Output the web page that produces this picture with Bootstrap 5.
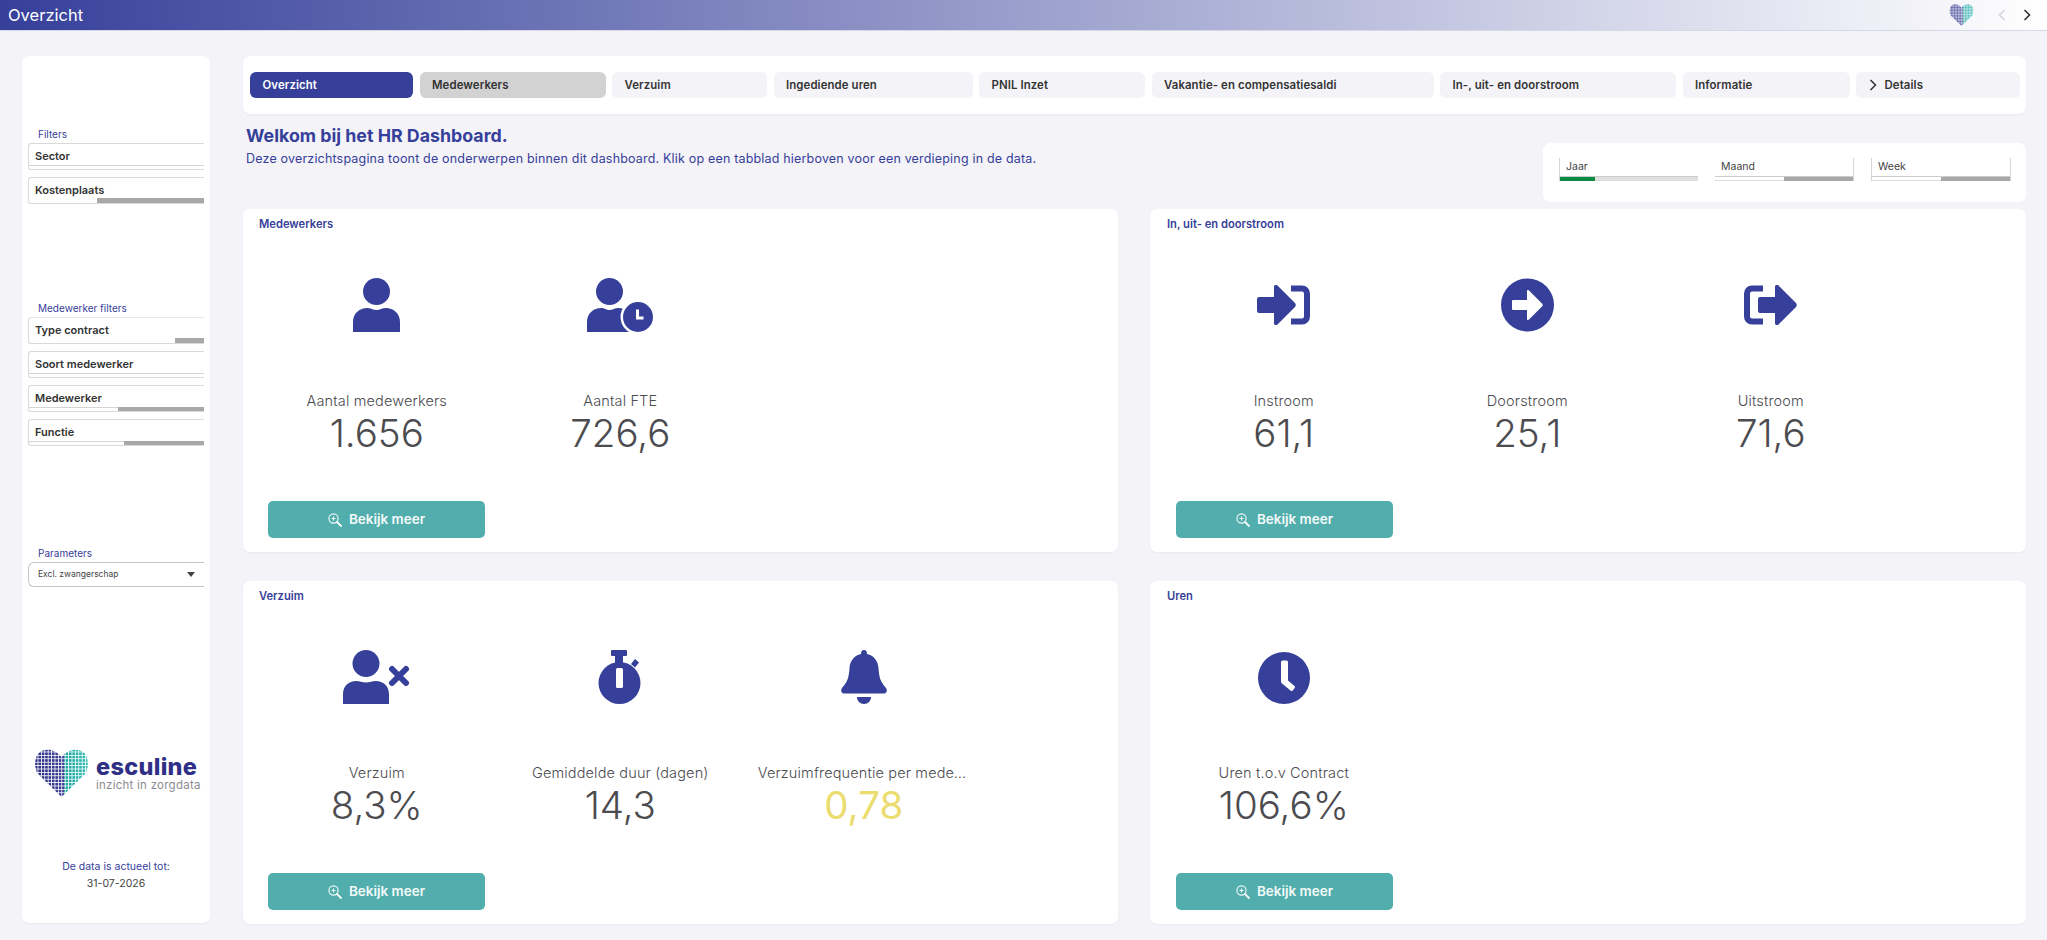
<!DOCTYPE html>
<html lang="nl">
<head>
    <meta charset="utf-8">
    <meta name="viewport" content="width=device-width, initial-scale=1">
    <title>Overzicht</title>
    <link href="https://cdn.jsdelivr.net/npm/bootstrap@5.3.3/dist/css/bootstrap.min.css" rel="stylesheet">
    <style>
        body {
            background: #f3f3f8;
            font-family: Inter, "Liberation Sans", sans-serif;
            height: 940px;
            overflow: hidden;
        }
        .top-bar {
            height: 31px;
            padding: 0 16px 0 8px;
            background: linear-gradient(90deg, #36409a 0%, #ffffff 100%);
            border-bottom: 1px solid #d5d6e6;
            color: #fff;
            font-size: 16.5px;
        }
        .top-heart { opacity: .85; }
        .top-arrows { gap: 17px; margin-left: 24px; }
        .page-wrap { padding: 25px 21px 0 22px; gap: 33px; }
        .side-panel {
            width: 188px;
            height: 867px;
            flex: none;
            background: #fff;
            border-radius: 7px;
            box-shadow: 0 1px 2px rgba(40, 40, 90, .05);
            padding: 0 6px;
        }
        .side-title { color: #36409a; font-size: 10px; line-height: 12px; padding-left: 10px; }
        .slicer {
            height: 27px;
            margin-bottom: 7px;
            border: 1px solid #d9d9d9;
            border-right: 0;
            border-radius: 3px 0 0 3px;
            color: #333;
            font-size: 11px;
            font-weight: 600;
            line-height: 14px;
            padding: 5px 6px 0;
            position: relative;
        }
        .slicer-track {
            position: absolute;
            left: 0; right: 0; bottom: 0;
            height: 4px;
            border-top: 1px solid #d4d4d4;
        }
        .slicer-fill {
            position: absolute;
            right: 0; top: -1px; bottom: 0;
            background: #a8a8a8;
        }
        .select-box {
            height: 25px;
            border: 1px solid #c4c4c4;
            border-right: 0;
            border-radius: 6px 0 0 6px;
            padding: 0 9px;
            font-size: 8.5px;
            color: #444;
        }
        .select-caret {
            width: 0; height: 0;
            border-left: 4px solid transparent;
            border-right: 4px solid transparent;
            border-top: 5px solid #444;
        }
        .brand-name { color: #2f2f86; font-size: 23.5px; font-weight: 800; line-height: 24px; letter-spacing: .3px; }
        .brand-sub { color: #8c8c92; font-size: 11.5px; line-height: 13px; letter-spacing: .25px; white-space: nowrap; }
        .data-note { font-size: 10.5px; line-height: 17px; color: #36409a; text-align: center; }
        .data-note div + div { color: #444; }
        .main-area { width: 1783px; flex: none; }
        .tab-card {
            height: 58px;
            padding: 16px 6px 0 7px;
            gap: 6.5px;
            background: #fff;
            border-radius: 7px;
            box-shadow: 0 1px 2px rgba(40, 40, 90, .05);
        }
        .tab-item {
            height: 26px;
            background: #f3f3f8;
            border-radius: 6px;
            color: #333;
            font-size: 11.4px;
            font-weight: 600;
            line-height: 26px;
            padding-left: 12.5px;
            letter-spacing: .1px;
            white-space: nowrap;
        }
        .tab-item.tab-active { background: #36409a; color: #fff; }
        .tab-item.tab-hover { background: #d2d2d2; }
        .welcome-row { height: 95px; }
        .welcome-title { color: #36409a; font-size: 17.8px; font-weight: 700; line-height: 22px; margin: 11px 0 0 3px; }
        .welcome-text { color: #36409a; font-size: 12.5px; line-height: 16px; margin: 4px 0 0 3px; letter-spacing: .18px; }
        .period-card {
            width: 483px;
            height: 59px;
            margin-top: 29px;
            padding: 15px 15px 0 16px;
            gap: 17px;
            background: #fff;
            border-radius: 7px;
        }
        .period-box {
            flex: 1;
            height: 23px;
            border-left: 1px solid #d4d4d4;
            border-right: 1px solid #d4d4d4;
            color: #444;
            font-size: 10.5px;
            line-height: 14px;
            padding: 2px 6px 0;
            position: relative;
        }
        .period-box.period-first { border-right: 0; }
        .period-box.period-mid { border-left: 0; }
        .period-track {
            position: absolute;
            left: 0; right: 0; bottom: 0;
            height: 5px;
            background: #fff;
            border-top: 1px solid #ccc;
            border-bottom: 1px solid #ddd;
        }
        .period-first .period-track { background: #e0e0e0; }
        .period-fill { position: absolute; top: 0; bottom: -1px; background: #a8a8a8; }
        .dash-grid { display: grid; grid-template-columns: 875px 876px; column-gap: 32px; row-gap: 29px; }
        .dash-card {
            height: 343px;
            background: #fff;
            border-radius: 7px;
            box-shadow: 0 1px 2px rgba(40, 40, 90, .05);
            padding: 8px 12px 0;
        }
        .dash-title { color: #36409a; font-size: 11.2px; font-weight: 600; line-height: 14px; padding-left: 4px; height: 14px; }
        .kpi-row { margin-top: 47px; height: 223px; }
        .kpi-item { width: 243.5px; flex: none; color: #4b4b50; text-align: center; }
        .kpi-icon { height: 54px; margin-bottom: 59px; }
        .kpi-icon svg { display: block; fill: #36409a; }
        .kpi-label { font-size: 14.5px; font-weight: 300; line-height: 20px; color: #4b4b50; max-width: 212px; letter-spacing: .15px; }
        .kpi-value { font-size: 38.5px; font-weight: 300; line-height: 45px; }
        .kpi-warn { color: #ebdc6e; font-weight: 400; }
        .more-btn {
            width: 217px;
            height: 37px;
            margin-left: 13px;
            background: #52aeac;
            border: 0;
            border-radius: 5px;
            color: #f4fafa;
            font-size: 13.5px;
            font-weight: 600;
            gap: 7px;
        }
        .more-btn:hover { background: #52aeac; color: #f4fafa; }
        .dash-right .more-btn { margin-left: 14px; }
        .dash-right .dash-title { padding-left: 5px; }
    </style>
</head>
<body>
    <div class="top-bar d-flex align-items-center">
        <div class="flex-grow-1">Overzicht</div>
        <svg class="top-heart" width="25" height="22" viewBox="0 0 53 48"><use href="#heart"/></svg>
        <div class="top-arrows d-flex align-items-center">
            <svg width="8" height="12" viewBox="0 0 8 12" fill="none" stroke="#d4d4da" stroke-width="1.6"><path d="M6.500 1 1.500 6l5 5"/></svg>
            <svg width="8" height="12" viewBox="0 0 8 12" fill="none" stroke="#333" stroke-width="1.6"><path d="M1.500 1l5 5-5 5"/></svg>
        </div>
    </div>

    <svg width="0" height="0" class="position-absolute">
        <defs>
            <pattern id="dotGrid" width="3.4" height="3.4" patternUnits="userSpaceOnUse">
                <rect width="2.6" height="2.6" fill="#fff"/>
            </pattern>
            <linearGradient id="heartFill" x1="0" y1="0" x2="1" y2="0">
                <stop offset="0" stop-color="#2f2f86"/>
                <stop offset=".54" stop-color="#3b3f94"/>
                <stop offset=".56" stop-color="#1aa6a0"/>
                <stop offset="1" stop-color="#35bdb6"/>
            </linearGradient>
            <mask id="dotMask">
                <rect width="53" height="48" fill="url(#dotGrid)"/>
            </mask>
            <symbol id="heart" viewBox="0 0 53 48">
                <path mask="url(#dotMask)" fill="url(#heartFill)" d="M26.500 48 3 25C-1.500 18-.5 7 5 3c6-4 15-3 21.500 5C33 0 42-1 48 3c5.500 4 6.500 15 2 22Z"/>
            </symbol>
            <symbol id="zoomGlass" viewBox="0 0 14 14">
                <circle cx="5.500" cy="5.500" r="4.600" fill="none" stroke="currentColor" stroke-width="1.100"/>
                <path d="M3.500 5.500h4M5.500 3.500v4" fill="none" stroke="currentColor" stroke-width="1"/>
                <path d="M9 9l4 4" fill="none" stroke="currentColor" stroke-width="1.800" stroke-linecap="round"/>
            </symbol>
        </defs>
    </svg>

    <div class="page-wrap d-flex">
        <aside class="side-panel d-flex flex-column">
            <div class="side-title" style="margin-top:72px">Filters</div>
            <div class="slicer" style="margin-top:3px">Sector<div class="slicer-track"></div></div>
            <div class="slicer">Kostenplaats<div class="slicer-track border-0"><div class="slicer-fill" style="width:107px"></div></div></div>

            <div class="side-title" style="margin-top:91px">Medewerker filters</div>
            <div class="slicer" style="margin-top:3px;border-top-color:#e6e6e6">Type contract<div class="slicer-track border-0"><div class="slicer-fill" style="width:29px"></div></div></div>
            <div class="slicer">Soort medewerker<div class="slicer-track"></div></div>
            <div class="slicer">Medewerker<div class="slicer-track"><div class="slicer-fill" style="width:86px"></div></div></div>
            <div class="slicer">Functie<div class="slicer-track"><div class="slicer-fill" style="width:80px"></div></div></div>

            <div class="side-title" style="margin-top:94px">Parameters</div>
            <div class="select-box d-flex align-items-center justify-content-between" style="margin-top:3px">
                <span>Excl. zwangerschap</span><span class="select-caret"></span>
            </div>

            <div class="d-flex align-items-center" style="margin:162px 0 0 7px">
                <svg width="53" height="48" class="flex-none"><use href="#heart"/></svg>
                <div class="ms-2">
                    <div class="brand-name">esculine</div>
                    <div class="brand-sub">inzicht in zorgdata</div>
                </div>
            </div>
            <div class="data-note" style="margin-top:61px">
                <div>De data is actueel tot:</div>
                <div>31-07-2026</div>
            </div>
        </aside>

        <main class="main-area">
            <div class="tab-card d-flex">
                <div class="tab-item tab-active" style="width:163px">Overzicht</div>
                <div class="tab-item tab-hover" style="width:186px">Medewerkers</div>
                <div class="tab-item" style="width:155px">Verzuim</div>
                <div class="tab-item" style="width:199px">Ingediende uren</div>
                <div class="tab-item" style="width:166px">PNIL Inzet</div>
                <div class="tab-item" style="width:282px">Vakantie- en compensatiesaldi</div>
                <div class="tab-item" style="width:236px">In-, uit- en doorstroom</div>
                <div class="tab-item" style="width:167px">Informatie</div>
                <div class="tab-item d-flex align-items-center" style="width:164px">
                    <svg width="8" height="12" viewBox="0 0 8 12" fill="none" stroke="#333" stroke-width="1.500" class="me-2"><path d="M1.500 1l5 5-5 5"/></svg>
                    Details
                </div>
            </div>

            <div class="welcome-row d-flex justify-content-between">
                <div>
                    <div class="welcome-title">Welkom bij het HR Dashboard.</div>
                    <div class="welcome-text">Deze overzichtspagina toont de onderwerpen binnen dit dashboard. Klik op een tabblad hierboven voor een verdieping in de data.</div>
                </div>
                <div class="period-card d-flex">
                    <div class="period-box period-first">Jaar<div class="period-track"><div class="period-fill" style="left:0;width:35px;background:#0b8a45"></div></div></div>
                    <div class="period-box period-mid">Maand<div class="period-track"><div class="period-fill" style="right:0;width:69px"></div></div></div>
                    <div class="period-box">Week<div class="period-track"><div class="period-fill" style="right:0;width:69px"></div></div></div>
                </div>
            </div>

            <div class="dash-grid">
                <section class="dash-card">
                    <div class="dash-title">Medewerkers</div>
                    <div class="kpi-row d-flex">
                        <div class="kpi-item d-flex flex-column align-items-center">
                            <div class="kpi-icon">
                                <svg width="47" height="54" viewBox="0 0 47 54"><circle cx="23.500" cy="13.500" r="13.500"/><path d="M0 54V44C0 35 7 30 14 30c4 0 6 2 9.500 2s5.500-2 9.500-2c7 0 14 5 14 14v10Z"/></svg>
                            </div>
                            <div class="kpi-label">Aantal medewerkers</div>
                            <div class="kpi-value">1.656</div>
                        </div>
                        <div class="kpi-item d-flex flex-column align-items-center">
                            <div class="kpi-icon">
                                <svg width="67" height="54" viewBox="0 0 67 54"><circle cx="22.500" cy="13.500" r="13.500"/><path d="M0 54V44C0 35 7 30 14 30c4 0 5 2 8.500 2s5-2 9-2c7 0 14 5 14 14v10Z"/><circle cx="51" cy="39" r="17.500" fill="#fff"/><circle cx="51" cy="39" r="15"/><path d="M50.500 31.500v8.500h6" fill="none" stroke="#fff" stroke-width="3"/></svg>
                            </div>
                            <div class="kpi-label">Aantal FTE</div>
                            <div class="kpi-value">726,6</div>
                        </div>
                    </div>
                    <button type="button" class="btn more-btn d-flex align-items-center justify-content-center"><svg width="14" height="14"><use href="#zoomGlass"/></svg>Bekijk meer</button>
                </section>

                <section class="dash-card dash-right">
                    <div class="dash-title">In, uit- en doorstroom</div>
                    <div class="kpi-row d-flex">
                        <div class="kpi-item d-flex flex-column align-items-center">
                            <div class="kpi-icon d-flex align-items-center">
                                <svg width="53" height="40" viewBox="0 0 53 40"><path d="M0 14a2 2 0 0 1 2-2H17V2c0-2 2-3 3.500-1.500L38 18c1 1 1 3 0 4L20.500 39.500C19 41 17 40 17 38V28H2a2 2 0 0 1-2-2Z"/><path d="M34 3.500h11a5 5 0 0 1 5 5v23a5 5 0 0 1-5 5H34" fill="none" stroke="#36409a" stroke-width="6"/></svg>
                            </div>
                            <div class="kpi-label">Instroom</div>
                            <div class="kpi-value">61,1</div>
                        </div>
                        <div class="kpi-item d-flex flex-column align-items-center">
                            <div class="kpi-icon">
                                <svg width="53" height="54" viewBox="0 0 53 54"><circle cx="26.500" cy="27" r="26.500"/><path fill="#fff" d="M12 22h14v-9c0-1 1-1.500 2-.6L41 25.500c1 1 1 2 0 3L28 41.600c-1 .9-2 .4-2-.6V32H12a1 1 0 0 1-1-1v-8a1 1 0 0 1 1-1Z"/></svg>
                            </div>
                            <div class="kpi-label">Doorstroom</div>
                            <div class="kpi-value">25,1</div>
                        </div>
                        <div class="kpi-item d-flex flex-column align-items-center">
                            <div class="kpi-icon d-flex align-items-center">
                                <svg width="53" height="40" viewBox="0 0 53 40"><path d="M19 3.500H8a5 5 0 0 0-5 5v23a5 5 0 0 0 5 5h11" fill="none" stroke="#36409a" stroke-width="6"/><path d="M14 14a2 2 0 0 1 2-2H31V2c0-2 2-3 3.500-1.500L52 18c1 1 1 3 0 4L34.500 39.500C33 41 31 40 31 38V28H16a2 2 0 0 1-2-2Z"/></svg>
                            </div>
                            <div class="kpi-label">Uitstroom</div>
                            <div class="kpi-value">71,6</div>
                        </div>
                    </div>
                    <button type="button" class="btn more-btn d-flex align-items-center justify-content-center"><svg width="14" height="14"><use href="#zoomGlass"/></svg>Bekijk meer</button>
                </section>

                <section class="dash-card">
                    <div class="dash-title">Verzuim</div>
                    <div class="kpi-row d-flex">
                        <div class="kpi-item d-flex flex-column align-items-center">
                            <div class="kpi-icon">
                                <svg width="67" height="54" viewBox="0 0 67 54"><circle cx="23" cy="13.500" r="13.500"/><path d="M0 54V44C0 36 6 31 13 31c4 0 6 1.500 10 1.500s6-1.500 10-1.500c7 0 13 5 13 13v10Z"/><path d="M49 19l14 14M63 19 49 33" stroke="#36409a" stroke-width="6" stroke-linecap="round" fill="none"/></svg>
                            </div>
                            <div class="kpi-label">Verzuim</div>
                            <div class="kpi-value">8,3%</div>
                        </div>
                        <div class="kpi-item d-flex flex-column align-items-center">
                            <div class="kpi-icon">
                                <svg width="44" height="54" viewBox="0 0 44 54"><rect x="13" y="0" width="16" height="6" rx="1"/><rect x="17" y="5" width="8" height="9"/><path d="M33 14l4-5 4 3.500-4 5Z"/><circle cx="21.500" cy="33" r="21"/><rect x="18" y="18" width="7" height="20" rx="1.500" fill="#fff"/></svg>
                            </div>
                            <div class="kpi-label">Gemiddelde duur (dagen)</div>
                            <div class="kpi-value">14,3</div>
                        </div>
                        <div class="kpi-item d-flex flex-column align-items-center">
                            <div class="kpi-icon">
                                <svg width="46" height="54" viewBox="0 0 46 54"><path d="M23 0c2 0 3 1.500 3 4 7 1.500 11 7 11.500 14 .5 9 2 14 7.500 20 1.500 2 1 5-2 5.500H3c-3-.5-3.500-3.500-2-5.500C6.500 32 8 27 8.500 18 9 11 13 5.500 20 4c0-2.500 1-4 3-4Z"/><path d="M16 47h14c0 4-3 7-7 7s-7-3-7-7Z"/></svg>
                            </div>
                            <div class="kpi-label text-truncate">Verzuimfrequentie per medewerker</div>
                            <div class="kpi-value kpi-warn">0,78</div>
                        </div>
                    </div>
                    <button type="button" class="btn more-btn d-flex align-items-center justify-content-center"><svg width="14" height="14"><use href="#zoomGlass"/></svg>Bekijk meer</button>
                </section>

                <section class="dash-card dash-right">
                    <div class="dash-title">Uren</div>
                    <div class="kpi-row d-flex">
                        <div class="kpi-item d-flex flex-column align-items-center">
                            <div class="kpi-icon d-flex align-items-end">
                                <svg width="52" height="52" viewBox="0 0 52 52"><circle cx="26" cy="26" r="26"/><path fill="#fff" d="M23 10a1.500 1.500 0 0 1 1.500-1.500h4A1.500 1.500 0 0 1 30 10v18.500l6.500 5.500c.6.5.7 1.300.2 1.900l-2 2.600c-.5.6-1.300.7-1.900.2L24 31.500c-.6-.5-1-1.200-1-2Z"/></svg>
                            </div>
                            <div class="kpi-label">Uren t.o.v Contract</div>
                            <div class="kpi-value">106,6%</div>
                        </div>
                    </div>
                    <button type="button" class="btn more-btn d-flex align-items-center justify-content-center"><svg width="14" height="14"><use href="#zoomGlass"/></svg>Bekijk meer</button>
                </section>
            </div>
        </main>
    </div>
    <script src="https://cdn.jsdelivr.net/npm/bootstrap@5.3.3/dist/js/bootstrap.bundle.min.js"></script>
</body>
</html>
